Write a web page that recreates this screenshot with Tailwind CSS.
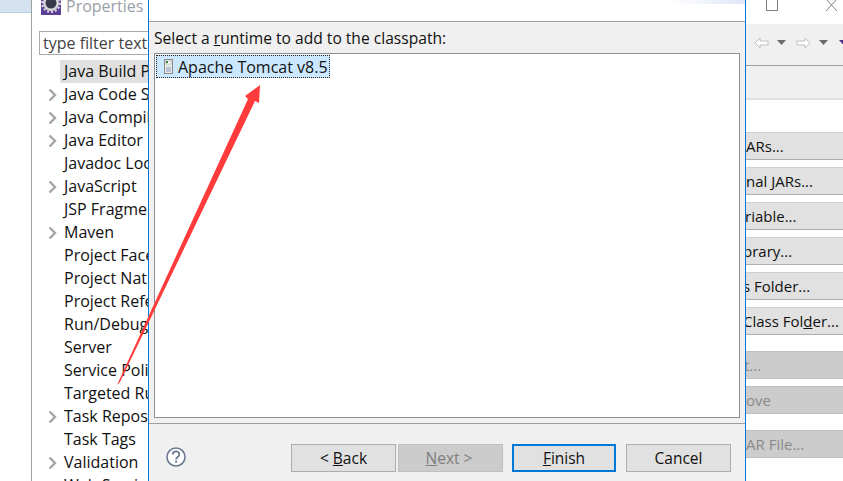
<!DOCTYPE html>
<html lang="en">
<head>
  <meta charset="UTF-8" />
  <title>Properties - Select a runtime</title>
  <script src="https://cdn.jsdelivr.net/npm/@tailwindcss/browser@4"></script>
</head>
<body class="bg-white overflow-hidden">
  <div class="relative flex w-[843px] h-[481px] overflow-hidden font-['Open_Sans',sans-serif] text-[16px] text-[#111]">

    <!-- left edge of the workbench -->
    <div class="w-[31px] shrink-0 bg-white">
      <div class="h-[13px] bg-[#d5e3f1] border-b border-[#b9cde0]"></div>
    </div>

    <!-- properties window -->
    <div class="w-[117px] shrink-0 border-l border-[#a0a0a0] overflow-hidden">
      <div class="h-[31px] flex items-start pl-[9px] gap-[5px]">
        <svg class="shrink-0" width="20" height="15" viewBox="0 0 20 15">
          <rect width="20" height="15" fill="#5b3f96"/>
          <circle cx="10" cy="3" r="8" fill="#d8d8dc"/>
          <circle cx="10" cy="3" r="9" fill="none" stroke="#d8d8dc" stroke-width="2" stroke-dasharray="2 2"/>
          <circle cx="10" cy="3" r="5.5" fill="#3a3a4c"/>
        </svg>
        <span class="text-[#9aa0a8] whitespace-nowrap leading-[13px]">Properties for</span>
      </div>
      <div class="ml-[7px] h-[24px] border border-[#a9a9a9] border-r-0 pl-[3px] leading-[22px] whitespace-nowrap text-[#444]">type filter text</div>
      <div class="mt-[5px] w-[200px]">
        <div class="h-[23px] ml-[28px] w-[88px] bg-[#e0e0e0] pl-[4px] leading-[23px] whitespace-nowrap">Java Build Path</div>
        <div class="flex h-[23px] items-center"><svg class="ml-[16px] w-[9px]" width="9" height="12" viewBox="0 0 9 12"><path d="M1.5 .5L7 6l-5.5 5.5" fill="none" stroke="#a6a6a6" stroke-width="2.4"/></svg><span class="ml-[7px] pb-[2px] whitespace-nowrap">Java Code Style</span></div>
        <div class="flex h-[23px] items-center"><svg class="ml-[16px] w-[9px]" width="9" height="12" viewBox="0 0 9 12"><path d="M1.5 .5L7 6l-5.5 5.5" fill="none" stroke="#a6a6a6" stroke-width="2.4"/></svg><span class="ml-[7px] pb-[2px] whitespace-nowrap">Java Compiler</span></div>
        <div class="flex h-[23px] items-center"><svg class="ml-[16px] w-[9px]" width="9" height="12" viewBox="0 0 9 12"><path d="M1.5 .5L7 6l-5.5 5.5" fill="none" stroke="#a6a6a6" stroke-width="2.4"/></svg><span class="ml-[7px] pb-[2px] whitespace-nowrap">Java Editor</span></div>
        <div class="flex h-[23px] items-center"><span class="ml-[32px] pb-[2px] whitespace-nowrap">Javadoc Location</span></div>
        <div class="flex h-[23px] items-center"><svg class="ml-[16px] w-[9px]" width="9" height="12" viewBox="0 0 9 12"><path d="M1.5 .5L7 6l-5.5 5.5" fill="none" stroke="#a6a6a6" stroke-width="2.4"/></svg><span class="ml-[7px] pb-[2px] whitespace-nowrap">JavaScript</span></div>
        <div class="flex h-[23px] items-center"><span class="ml-[32px] pb-[2px] whitespace-nowrap">JSP Fragment</span></div>
        <div class="flex h-[23px] items-center"><svg class="ml-[16px] w-[9px]" width="9" height="12" viewBox="0 0 9 12"><path d="M1.5 .5L7 6l-5.5 5.5" fill="none" stroke="#a6a6a6" stroke-width="2.4"/></svg><span class="ml-[7px] pb-[2px] whitespace-nowrap">Maven</span></div>
        <div class="flex h-[23px] items-center"><span class="ml-[32px] pb-[2px] whitespace-nowrap">Project Facets</span></div>
        <div class="flex h-[23px] items-center"><span class="ml-[32px] pb-[2px] whitespace-nowrap">Project Natures</span></div>
        <div class="flex h-[23px] items-center"><span class="ml-[32px] pb-[2px] whitespace-nowrap">Project References</span></div>
        <div class="flex h-[23px] items-center"><span class="ml-[32px] pb-[2px] whitespace-nowrap">Run/Debug Settings</span></div>
        <div class="flex h-[23px] items-center"><span class="ml-[32px] pb-[2px] whitespace-nowrap">Server</span></div>
        <div class="flex h-[23px] items-center"><span class="ml-[32px] pb-[2px] whitespace-nowrap">Service Policies</span></div>
        <div class="flex h-[23px] items-center"><span class="ml-[32px] pb-[2px] whitespace-nowrap">Targeted Runtimes</span></div>
        <div class="flex h-[23px] items-center"><svg class="ml-[16px] w-[9px]" width="9" height="12" viewBox="0 0 9 12"><path d="M1.5 .5L7 6l-5.5 5.5" fill="none" stroke="#a6a6a6" stroke-width="2.4"/></svg><span class="ml-[7px] pb-[2px] whitespace-nowrap">Task Repository</span></div>
        <div class="flex h-[23px] items-center"><span class="ml-[32px] pb-[2px] whitespace-nowrap">Task Tags</span></div>
        <div class="flex h-[23px] items-center"><svg class="ml-[16px] w-[9px]" width="9" height="12" viewBox="0 0 9 12"><path d="M1.5 .5L7 6l-5.5 5.5" fill="none" stroke="#a6a6a6" stroke-width="2.4"/></svg><span class="ml-[7px] pb-[2px] whitespace-nowrap">Validation</span></div>
        <div class="flex h-[23px] items-center"><span class="ml-[32px] pb-[2px] whitespace-nowrap">Web Services</span></div>
      </div>
    </div>

    <!-- runtime dialog -->
    <div class="w-[598px] shrink-0 border-x border-[#0078d7] flex flex-col">
      <div class="h-[21px] bg-white">
        <div class="h-[4px] ml-[520px] bg-gradient-to-r from-white to-[#dfe6f8]"></div>
      </div>
      <div class="flex-1 bg-[#f0f0f0] border-t border-[#a0a0a0] flex flex-col">
        <div class="px-[5px] h-[31px] pt-[6px] whitespace-nowrap leading-[20px] text-[15.6px]"><span>Select a <u>r</u>untime to add to the classpath:</span></div>
        <div class="mx-[5px] h-[365px] bg-white border border-[#8f8f8f] p-[1px]">
          <div class="w-[174px] h-[23px] bg-[#cce8ff] border border-dotted border-[#222] flex items-center pl-[7px] gap-[5px]">
            <svg class="shrink-0" width="9" height="15" viewBox="0 0 9 15">
              <rect x="0.5" y="0.5" width="8" height="14" fill="#e8ece8" stroke="#8a8a8a"/>
              <rect x="2" y="2" width="5" height="3" fill="#fff" stroke="#999" stroke-width="0.5"/>
              <rect x="2" y="2" width="2" height="2" fill="#2f8f3a"/>
              <rect x="2" y="8" width="5" height="5" fill="#b9c4d4"/>
            </svg>
            <span class="whitespace-nowrap">Apache Tomcat v8.5</span>
          </div>
        </div>
        <div class="mt-[5px] border-t border-[#a0a0a0] flex-1 flex items-start pt-[20px] text-[15.5px]">
          <svg class="ml-[17px] mt-[3px] shrink-0" width="20" height="20" viewBox="0 0 20 20">
            <circle cx="10" cy="10" r="9" fill="#fff" stroke="#68788f" stroke-width="1.6"/>
            <path d="M6.8 7.6c0-4.2 6.5-4.2 6.5-.2 0 2.5-3.2 2.6-3.2 5" fill="none" stroke="#68788f" stroke-width="1.8"/>
            <rect x="9.1" y="13.6" width="2" height="2" fill="#68788f"/>
          </svg>
          <div class="ml-[105px] flex">
            <button class="w-[105px] h-[28px] pt-[2px] bg-[#e1e1e1] border border-[#adadad]">&lt; <u>B</u>ack</button>
            <button class="ml-[2px] w-[105px] h-[28px] pt-[2px] pr-[3px] bg-[#cccccc] border border-[#bfbfbf] text-[#7f7f7f]"><u>N</u>ext &gt;</button>
            <button class="ml-[9px] w-[104px] h-[28px] pt-[1px] bg-[#e1e1e1] border-2 border-[#0078d7]"><u>F</u>inish</button>
            <button class="ml-[10px] w-[105px] h-[28px] pt-[2px] bg-[#e1e1e1] border border-[#adadad]">Cancel</button>
          </div>
        </div>
      </div>
    </div>

    <!-- build path page, behind the dialog -->
    <div class="flex-1 flex flex-col min-w-0 overflow-hidden">
      <div class="h-[24px] bg-white flex items-start">
        <div class="ml-[20px] w-[12px] h-[11px] border border-t-0 border-[#808080]"></div>
        <svg class="ml-[47px]" width="13" height="12" viewBox="0 0 13 12"><path d="M1 -1l11 12M12 -1L1 11" stroke="#808080" fill="none"/></svg>
      </div>
      <div class="h-[42px] bg-[#f0f0f0] border-b border-[#a0a0a0] flex items-center pl-[8px] pb-[4px]">
        <svg class="shrink-0" width="15" height="12" viewBox="0 0 15 12"><path d="M1 6l5-5v3h8v4H6v3z" fill="#fff" stroke="#c0c0c0"/></svg>
        <svg class="ml-[8px] shrink-0" width="9" height="5" viewBox="0 0 9 5"><path d="M0 0h9L4.5 5z" fill="#6b6b6b"/></svg>
        <svg class="ml-[10px] shrink-0" width="15" height="12" viewBox="0 0 15 12"><path d="M14 6L9 1v3H1v4h8v3z" fill="#fff" stroke="#c0c0c0"/></svg>
        <svg class="ml-[8px] shrink-0" width="9" height="5" viewBox="0 0 9 5"><path d="M0 0h9L4.5 5z" fill="#6b6b6b"/></svg>
        <svg class="ml-[11px] shrink-0" width="9" height="5" viewBox="0 0 9 5"><path d="M0 0h9L4.5 5z" fill="#4b2e8f"/></svg>
      </div>
      <div class="h-[34px] bg-[#f0f0f0] border-b-2 border-[#e0e0e0]"></div>
      <div class="flex-1 bg-white pt-[32px] whitespace-nowrap text-[15px]">
        <div class="h-[28px] pt-[1px] bg-[#e1e1e1] border-y border-[#adadad] border-t-[#d0d0d0] flex items-center"><span>ARs...</span></div>
        <div class="mt-[7px] h-[28px] pt-[1px] bg-[#e1e1e1] border-y border-[#adadad] border-t-[#d0d0d0] flex items-center"><span>nal JARs...</span></div>
        <div class="mt-[7px] h-[28px] pt-[1px] bg-[#e1e1e1] border-y border-[#adadad] border-t-[#d0d0d0] flex items-center"><span class="-ml-[1px]">riable...</span></div>
        <div class="mt-[7px] h-[28px] pt-[1px] bg-[#e1e1e1] border-y border-[#adadad] border-t-[#d0d0d0] flex items-center"><span class="-ml-[3px]">brary...</span></div>
        <div class="mt-[7px] h-[28px] pt-[1px] bg-[#e1e1e1] border-y border-[#adadad] border-t-[#d0d0d0] flex items-center"><span class="-ml-[3px]">s Folder...</span></div>
        <div class="mt-[7px] h-[28px] pt-[1px] bg-[#e1e1e1] border-y border-[#adadad] border-t-[#d0d0d0] flex items-center"><span class="-ml-[3px]">Class Fol<u>d</u>er...</span></div>
        <div class="mt-[16px] h-[28px] pt-[1px] bg-[#cccccc] border-y border-[#bfbfbf] flex items-center text-[#8a8a8a]"><span class="-ml-[2px]">t...</span></div>
        <div class="mt-[7px] h-[28px] pt-[1px] bg-[#cccccc] border-y border-[#bfbfbf] flex items-center text-[#8a8a8a]"><span>ove</span></div>
        <div class="mt-[16px] h-[28px] pt-[1px] bg-[#cccccc] border-y border-[#bfbfbf] flex items-center text-[#8a8a8a]"><span>AR File...</span></div>
      </div>
    </div>

    <!-- red annotation arrow drawn over the screenshot -->
    <svg class="absolute left-0 top-0 pointer-events-none" width="843" height="481" viewBox="0 0 843 481">
      <path d="M260 85 L259 103 L255 101 L120 382 L117 385 L248 99 L245 96 Z" fill="#ff3b3b"/>
    </svg>
  </div>
</body>
</html>
